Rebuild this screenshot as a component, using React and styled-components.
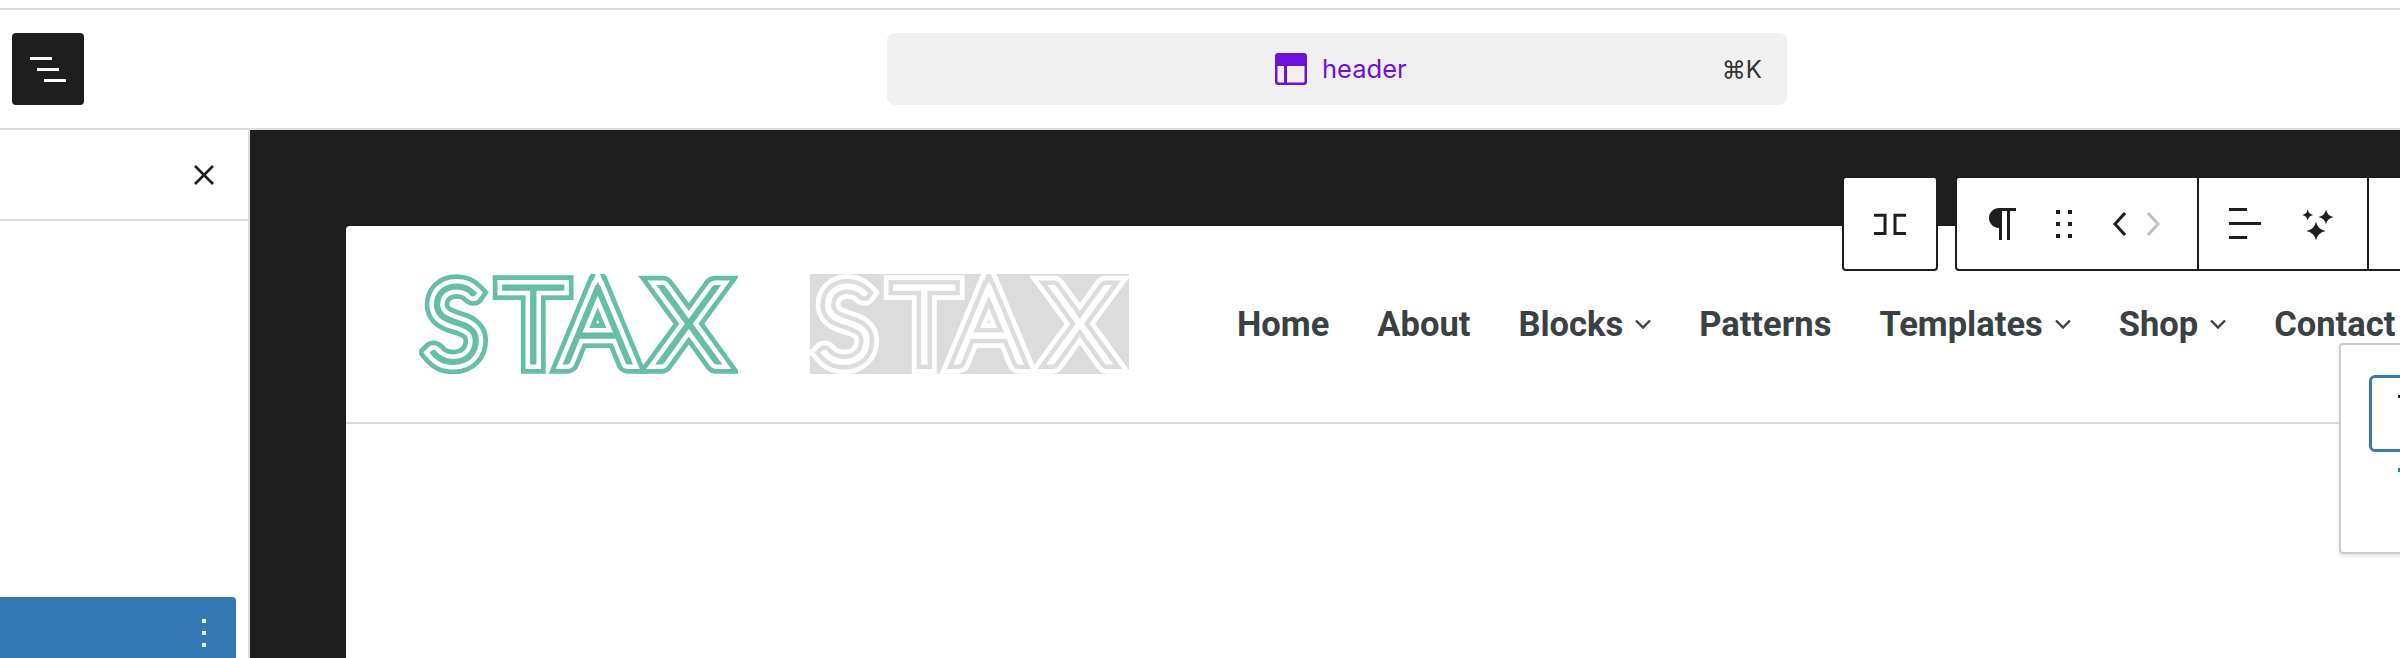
import React, {useId} from 'react'
import styled, {createGlobalStyle} from 'styled-components'

const GlobalStyle = createGlobalStyle`
	html, body {
		margin: 0;
		padding: 0;
		background: #fff;
	}
	* {
		box-sizing: border-box;
	}
`

const DARK = '#1e1e1e'

const Screen = styled.div`
	position: relative;
	display: flex;
	flex-direction: column;
	width: 2400px;
	height: 658px;
	overflow: hidden;
	background: #fff;
	font-family: Inter, 'Liberation Sans', sans-serif;
`

const TopStrip = styled.div`
	flex: none;
	height: 10px;
	border-bottom: 2px solid #ddd;
`

const Header = styled.header`
	flex: none;
	position: relative;
	display: flex;
	align-items: center;
	height: 120px;
	padding: 0 12px;
	border-bottom: 2px solid #ddd;
`

const MenuButton = styled.button`
	display: flex;
	align-items: center;
	justify-content: center;
	width: 72px;
	height: 72px;
	padding: 0;
	border: 0;
	border-radius: 4px;
	background: ${DARK};
	color: #fff;
`

const CommandBar = styled.div`
	display: flex;
	align-items: center;
	width: 900px;
	height: 72px;
	margin-left: 803px;
	padding: 0 25px 0 388px;
	border-radius: 8px;
	background: #f0f0f0;
`

const CommandTitle = styled.span`
	display: flex;
	align-items: center;
	gap: 15px;
	flex: 1;
	color: #6d13d9;
	font-size: 25.5px;
	line-height: 32px;
`

const Shortcut = styled.span`
	color: #333;
	font-size: 24px;
`

const Main = styled.main`
	flex: 1;
	display: flex;
	min-height: 0;
`

const Sidebar = styled.aside`
	flex: none;
	display: flex;
	flex-direction: column;
	width: 250px;
	border-right: 2px solid #ddd;
`

const SidebarHead = styled.div`
	flex: none;
	display: flex;
	align-items: center;
	justify-content: flex-end;
	height: 91px;
	padding-right: 34px;
	border-bottom: 2px solid #ddd;
	color: ${DARK};
`

const SidebarBody = styled.div`
	flex: 1;
	display: flex;
	flex-direction: column;
	justify-content: flex-end;
`

const SelectedRow = styled.div`
	display: flex;
	align-items: center;
	justify-content: flex-end;
	width: 236px;
	height: 61px;
	padding: 11px 30px 0 0;
	border-radius: 0 4px 0 0;
	background: #3579b4;
`

const Kebab = styled.span`
	display: grid;
	gap: 8px;

	i {
		display: block;
		width: 4px;
		height: 4px;
		background: #fff;
	}
`

const Canvas = styled.section`
	flex: 1;
	min-width: 0;
	padding: 96px 0 0 96px;
	background: ${DARK};
`

const Page = styled.div`
	height: 100%;
	border-radius: 4px 0 0 0;
	background: #fff;
`

const SiteHeader = styled.div`
	display: flex;
	align-items: center;
	height: 198px;
	padding-left: 73px;
	border-bottom: 2px solid #ddd;
	white-space: nowrap;
`

const LogoImage = styled.svg`
	flex: none;
	display: block;
	background: ${(p) => (p.$plate ? '#dcdcdc' : 'transparent')};
	margin-left: ${(p) => p.$offset || 0}px;
`

const Nav = styled.nav`
	display: flex;
	align-items: center;
	gap: 48px;
	margin-left: 108px;
	color: #3a4145;
	font-family: Roboto, 'Liberation Sans', sans-serif;
	font-size: 34.5px;
	font-weight: 700;
`

const NavItem = styled.span`
	display: flex;
	align-items: center;
	gap: 12px;
`

const FloatingToolbars = styled.div`
	position: absolute;
	top: 176px;
	left: 1842px;
	display: flex;
	gap: 17px;
	color: ${DARK};
`

const ToolbarGroup = styled.div`
	display: flex;
	align-items: stretch;
	height: 95px;
	border: 2px solid ${DARK};
	border-radius: 4px;
	background: #fff;
`

const ToolbarSection = styled.div`
	display: flex;
	align-items: center;
	width: ${(p) => p.$width}px;
	padding-left: ${(p) => p.$inset || 0}px;
	border-right: ${(p) => (p.$divided ? `2px solid ${DARK}` : '0')};
`

const IconSlot = styled.span`
	flex: none;
	display: flex;
	align-items: center;
	justify-content: center;
	width: ${(p) => p.$width}px;
	height: 48px;
	color: ${(p) => (p.$muted ? '#c0c0c0' : 'inherit')};

	svg {
		flex: none;
	}
`

const Popover = styled.div`
	position: absolute;
	top: 343px;
	left: 2339px;
	width: 100px;
	height: 211px;
	padding: 30px 0 0 28px;
	border: 2px solid #ccc;
	border-radius: 4px;
	background: #fff;
	box-shadow: 0 2px 4px rgba(0, 0, 0, 0.12);
`

const FocusBox = styled.div`
	position: relative;
	width: 90px;
	height: 77px;
	border: 3px solid #3579b4;
	border-radius: 6px;

	&::before {
		content: '';
		position: absolute;
		top: 17px;
		left: 26px;
		width: 4px;
		height: 3px;
		background: ${DARK};
	}

	&::after {
		content: '';
		position: absolute;
		top: 90px;
		left: 26px;
		width: 4px;
		height: 4px;
		background: #3579b4;
	}
`

function Icon({children, size = 48, box = 24}) {
	return (
		<svg width={size} height={size} viewBox={`0 0 ${box} ${box}`} fill="currentColor" aria-hidden="true">
			{children}
		</svg>
	)
}

function star(cx, cy, r) {
	const k = r * 0.16
	return `M${cx} ${cy - r}Q${cx + k} ${cy - k} ${cx + r} ${cy}Q${cx + k} ${cy + k} ${cx} ${cy + r}Q${cx - k} ${cy + k} ${cx - r} ${cy}Q${cx - k} ${cy - k} ${cx} ${cy - r}Z`
}

function Logo({ink, ground, plate, offset}) {
	const id = useId()
	return (
		<LogoImage $plate={plate} $offset={offset} width="319" height="100" viewBox="0 0 319 100">
			<defs>
				<text
					id={id}
					x="8 84 145 238"
					y="88"
					fontFamily="Lato, 'Liberation Sans', sans-serif"
					fontWeight="100"
					fontSize="106"
				>
					STAX
				</text>
			</defs>
			<use href={`#${id}`} fill={ink} stroke={ink} strokeWidth="23.500" strokeMiterlimit="3" />
			<use href={`#${id}`} fill={ground} stroke={ground} strokeWidth="14" strokeMiterlimit="3" />
			<use href={`#${id}`} fill={ink} stroke={ink} strokeWidth="5" strokeMiterlimit="3" />
		</LogoImage>
	)
}

function Caret() {
	return (
		<svg width="16" height="10" viewBox="0 0 16 10" fill="none" stroke="currentColor" strokeWidth="2.4" aria-hidden="true">
			<path d="M1 1.5l7 7 7-7" />
		</svg>
	)
}

export default function App() {
	return (
		<Screen>
			<GlobalStyle />
			<TopStrip />
			<Header>
				<MenuButton aria-label="Document overview">
					<svg width="48" height="48" viewBox="0 0 48 48" fill="currentColor" aria-hidden="true">
						<path d="M6 12h22v3H6zM13 23h22v3H13zM20 34h22v3H20z" />
					</svg>
				</MenuButton>
				<CommandBar>
					<CommandTitle>
						<svg width="32" height="32" viewBox="0 0 32 32" aria-hidden="true">
							<rect width="32" height="32" rx="3" fill="currentColor" />
							<path d="M2.5 13H9v16.5H4A1.5 1.5 0 0 1 2.5 28ZM12 13h17.500V28a1.500 1.500 0 0 1-1.500 1.500H12Z" fill="#f0f0f0" />
						</svg>
						header
					</CommandTitle>
					<Shortcut>⌘K</Shortcut>
				</CommandBar>
			</Header>
			<Main>
				<Sidebar>
					<SidebarHead>
						<svg width="20" height="20" viewBox="0 0 20 20" fill="none" stroke="currentColor" strokeWidth="2.6" aria-hidden="true">
							<path d="M1 1l18 18M19 1L1 19" />
						</svg>
					</SidebarHead>
					<SidebarBody>
						<SelectedRow>
							<Kebab>
								<i />
								<i />
								<i />
							</Kebab>
						</SelectedRow>
					</SidebarBody>
				</Sidebar>
				<Canvas>
					<Page>
						<SiteHeader>
							<Logo ink="#67bea8" ground="#fff" />
							<Logo ink="#fff" ground="#dcdcdc" plate offset={72} />
							<Nav>
								<NavItem>Home</NavItem>
								<NavItem>About</NavItem>
								<NavItem>
									Blocks
									<Caret />
								</NavItem>
								<NavItem>Patterns</NavItem>
								<NavItem>
									Templates
									<Caret />
								</NavItem>
								<NavItem>
									Shop
									<Caret />
								</NavItem>
								<NavItem>Contact</NavItem>
							</Nav>
						</SiteHeader>
					</Page>
				</Canvas>
			</Main>
			<FloatingToolbars>
				<ToolbarGroup>
					<ToolbarSection $width={92}>
						<IconSlot $width={92}>
							<svg width="48" height="48" viewBox="0 0 48 48" fill="none" stroke="currentColor" strokeWidth="3" aria-hidden="true">
								<path d="M8 15.200H19V33.500H8M40 15.200H29V33.500H40" />
							</svg>
						</IconSlot>
					</ToolbarSection>
				</ToolbarGroup>
				<ToolbarGroup>
					<ToolbarSection $width={242} $inset={8} $divided>
						<IconSlot $width={76}>
							<Icon>
								<path d="m9.99609 14v-.2251l.00391.0001v6.225h1.5v-14.5h2.5v14.5h1.5v-14.5h3v-1.5h-8.50391c-2.76142 0-5 2.23858-5 5 0 2.7614 2.23858 5 5 5z" />
							</Icon>
						</IconSlot>
						<IconSlot $width={46}>
							<Icon>
								<path d="M8 7h2V5H8v2zm0 6h2v-2H8v2zm0 6h2v-2H8v2zm6-14v2h2V5h-2zm0 8h2v-2h-2v2zm0 6h2v-2h-2v2z" />
							</Icon>
						</IconSlot>
						<IconSlot $width={18} />
						<IconSlot $width={32}>
							<Icon>
								<path d="M14.6 7l-1.2-1L8 12l5.4 6 1.2-1-4.6-5z" />
							</Icon>
						</IconSlot>
						<IconSlot $width={30} $muted>
							<Icon>
								<path d="M10.6 6L9.4 7l4.6 5-4.6 5 1.2 1 5.4-6z" />
							</Icon>
						</IconSlot>
					</ToolbarSection>
					<ToolbarSection $width={170} $divided>
						<IconSlot $width={92}>
							<Icon>
								<path d="M13 5.5H4V4h9v1.5Zm7 7H4V11h16v1.5Zm-7 7H4V18h9v1.5Z" />
							</Icon>
						</IconSlot>
						<IconSlot $width={52}>
							<Icon box={48}>
								<path d={star(14.7, 15, 5.5) + star(33, 17, 7.5) + star(23, 31, 9.5)} />
							</Icon>
						</IconSlot>
					</ToolbarSection>
					<ToolbarSection $width={60} />
				</ToolbarGroup>
			</FloatingToolbars>
			<Popover>
				<FocusBox />
			</Popover>
		</Screen>
	)
}
